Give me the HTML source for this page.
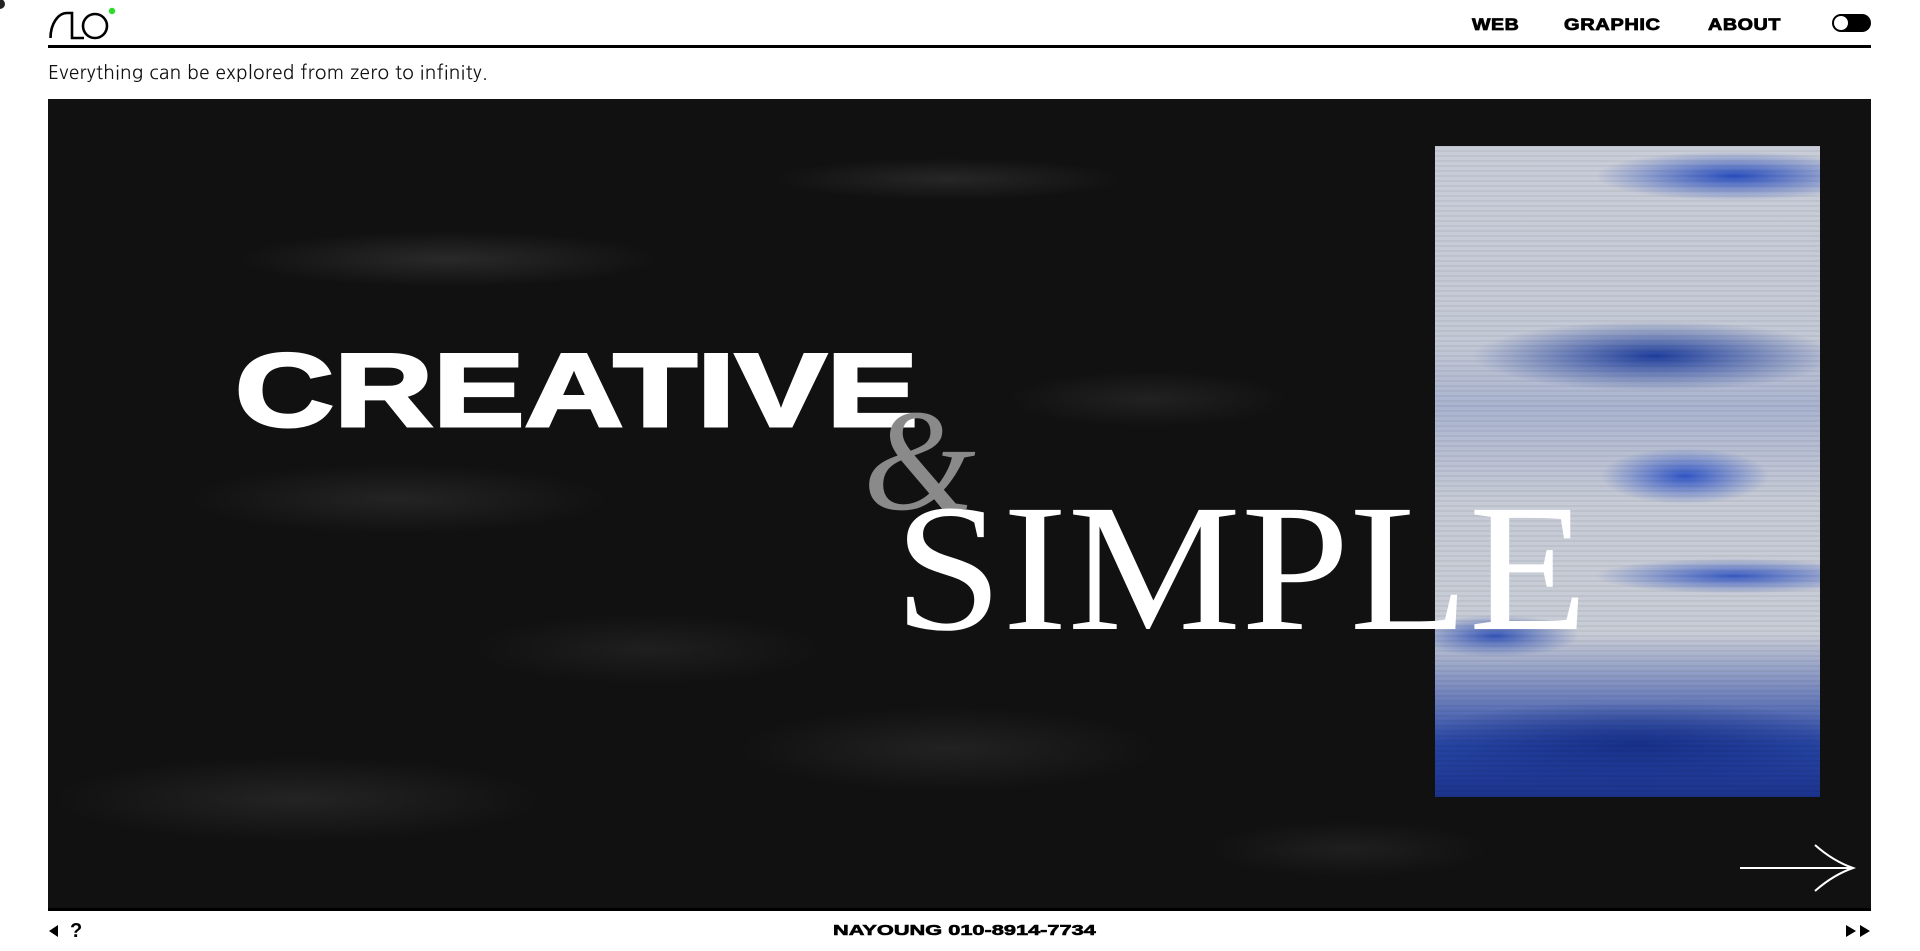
<!DOCTYPE html>
<html><head><meta charset="utf-8"><style>
html,body{margin:0;padding:0;background:#fff;width:1920px;height:951px;overflow:hidden;font-family:"Liberation Sans",sans-serif}
.abs{position:absolute}
.nav{position:absolute;top:15px;font-family:"Liberation Sans",sans-serif;font-weight:bold;font-size:17px;letter-spacing:0.5px;color:#000;transform-origin:left top;-webkit-text-stroke:0.8px #000}
#hero{position:absolute;left:48px;top:99px;width:1823px;height:812px;background:#111;overflow:hidden;border-bottom:3px solid #000;box-sizing:border-box}
</style></head><body>
<svg class="abs" style="left:0;top:0" width="130" height="45">
<path d="M50.5 38 C50.5 24 58 13 67 13 L72 13 L72 38 L84 38" fill="none" stroke="#000" stroke-width="2.6"/>
<circle cx="95" cy="26" r="12" fill="none" stroke="#000" stroke-width="2.6"/>
<circle cx="112" cy="11" r="3.2" fill="#2bdc2b"/>
<circle cx="0" cy="4" r="5" fill="#222"/>
</svg>
<div class="nav" style="left:1472px;transform:scaleX(1.15)">WEB</div>
<div class="nav" style="left:1564px;transform:scaleX(1.18)">GRAPHIC</div>
<div class="nav" style="left:1708px;transform:scaleX(1.16)">ABOUT</div>
<div class="abs" style="left:1832px;top:14px;width:39px;height:18px;border-radius:9px;background:#000"></div>
<div class="abs" style="left:1834px;top:16px;width:14px;height:14px;border-radius:50%;background:#fff"></div>
<div class="abs" style="left:48px;top:45px;width:1823px;height:3px;background:#000"></div>
<div class="abs" style="left:48px;top:61px;font-family:'NanumGothic','Liberation Sans',sans-serif;font-size:19px;color:#111;letter-spacing:0.35px">Everything can be explored from zero to infinity.</div>
<div id="hero">
<div class="abs" style="inset:0;background:
radial-gradient(ellipse 300px 40px at 400px 160px,rgba(255,255,255,.10),transparent 70%),
radial-gradient(ellipse 250px 30px at 900px 80px,rgba(255,255,255,.09),transparent 70%),
radial-gradient(ellipse 300px 50px at 350px 400px,rgba(255,255,255,.08),transparent 70%),
radial-gradient(ellipse 200px 40px at 1100px 300px,rgba(255,255,255,.07),transparent 70%),
radial-gradient(ellipse 350px 60px at 250px 700px,rgba(255,255,255,.08),transparent 70%),
radial-gradient(ellipse 300px 60px at 900px 650px,rgba(255,255,255,.07),transparent 70%),
radial-gradient(ellipse 250px 50px at 600px 550px,rgba(255,255,255,.06),transparent 70%),
radial-gradient(ellipse 200px 40px at 1300px 750px,rgba(255,255,255,.06),transparent 70%)"></div>
<div class="abs" style="left:1387px;top:47px;width:385px;height:651px;background:
repeating-linear-gradient(0deg,rgba(0,0,0,.05) 0 2px,transparent 2px 5px),
radial-gradient(ellipse 200px 35px at 300px 30px,#2a4fc0,transparent 70%),
radial-gradient(ellipse 260px 50px at 220px 210px,#1f3f9e,transparent 70%),
radial-gradient(ellipse 120px 40px at 250px 330px,#3358c8,transparent 70%),
radial-gradient(ellipse 200px 25px at 300px 430px,#3a5cc4,transparent 70%),
radial-gradient(ellipse 120px 30px at 60px 490px,#3556b8,transparent 70%),
radial-gradient(ellipse 320px 60px at 200px 600px,#17318a,transparent 75%),
linear-gradient(180deg,#c9cdd8 0%,#c4c9d6 30%,#aab4d0 40%,#c7cbd6 55%,#c8ccd6 75%,#2a48a8 92%,#1b338c 100%)"></div>
<svg class="abs" style="left:0;top:0" width="1823" height="812">
<text x="187" y="327" textLength="683" lengthAdjust="spacingAndGlyphs" font-family="Liberation Sans" font-weight="bold" font-size="104" fill="#fff" stroke="#fff" stroke-width="3">CREATIVE</text>
<text x="815" y="410" font-family="Liberation Serif" font-size="145" fill="#8a8a8a" font-style="italic">&amp;</text>
<text x="846" y="530" textLength="694" lengthAdjust="spacingAndGlyphs" font-family="Liberation Serif" font-size="182" fill="#fff">SIMPLE</text>
<path d="M1692 769 H1805 M1767 746 Q1785 762 1805 769 Q1785 776 1767 792" fill="none" stroke="#fff" stroke-width="2"/>
</svg>
</div>
<svg class="abs" style="left:48px;top:924px" width="12" height="14"><path d="M10 1 L1 7 L10 13Z" fill="#000"/></svg>
<div class="abs" style="left:70px;top:920px;font-weight:900;font-size:20px">?</div>
<div class="abs" style="left:833px;top:922px;font-weight:bold;font-size:15px;transform:scaleX(1.45);transform-origin:left top;-webkit-text-stroke:0.6px #000">NAYOUNG 010-8914-7734</div>
<svg class="abs" style="left:1845px;top:924px" width="27" height="14"><path d="M1 1 L11 7 L1 13Z M15 1 L25 7 L15 13Z" fill="#000"/></svg>
</body></html>
